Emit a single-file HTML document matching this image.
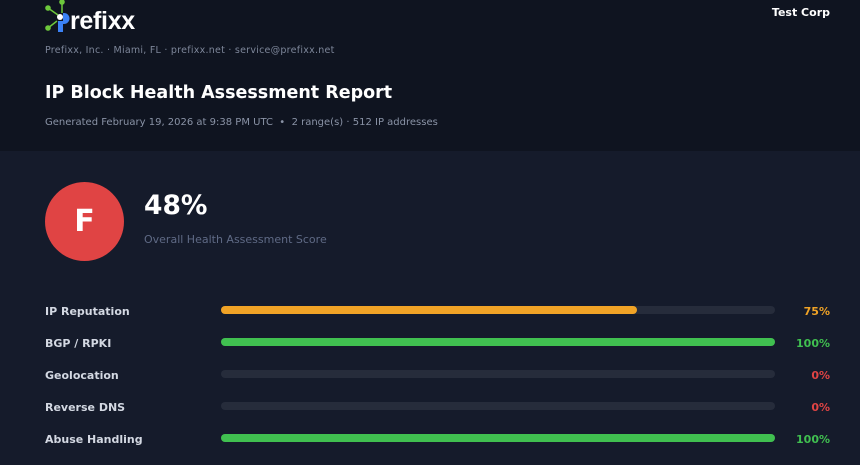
<!DOCTYPE html>
<html><head><style>
*{margin:0;padding:0;box-sizing:border-box}
body{width:860px;height:465px;overflow:hidden;background:#151b2b;font-family:"DejaVu Sans","Liberation Sans",sans-serif;position:relative}
.hdr{position:absolute;left:0;top:0;width:860px;height:151px;background:#0f1420}
.t{position:absolute;white-space:nowrap}
.row{position:absolute;left:0;width:860px;height:20px}
.lbl{position:absolute;left:45px;top:2px;font-size:11px;font-weight:bold;color:#d3d8e2}
.track{position:absolute;left:221px;top:3px;width:554px;height:8px;border-radius:4px;background:#262c3b}
.fill{height:8px;border-radius:4px}
.pct{position:absolute;right:30px;top:2px;font-size:11px;font-weight:bold}
</style></head><body>
<div class="hdr"></div>
<svg class="t" style="left:44px;top:0" width="26" height="34" viewBox="0 0 26 34">
<line x1="4" y1="8" x2="14" y2="15" stroke="#6dc83c" stroke-width="1.5"/>
<line x1="18" y1="2" x2="18" y2="13" stroke="#6dc83c" stroke-width="1.5"/>
<line x1="4" y1="28" x2="13" y2="21" stroke="#6dc83c" stroke-width="1.5"/>
<circle cx="4" cy="8" r="2.8" fill="#6dc83c"/><circle cx="18" cy="2" r="2.8" fill="#6dc83c"/><circle cx="4" cy="28" r="2.8" fill="#6dc83c"/>
<circle cx="16" cy="17" r="3" fill="#fff"/>
<rect x="14" y="21" width="5" height="11" fill="#3b82f6"/>
<path d="M19 13 h1 a5.5 5.5 0 0 1 0 11 h-1z" fill="#3b82f6"/>
</svg>
<div class="t" style="left:70px;top:7px;font-size:25px;font-weight:bold;color:#fff;font-family:'Liberation Sans',sans-serif;letter-spacing:-0.3px">refixx</div>
<div class="t" style="right:30px;top:6px;font-size:11px;font-weight:bold;color:#fff">Test Corp</div>
<div class="t" style="left:45px;top:45px;font-size:9.5px;color:#7d8699;letter-spacing:0.25px">Prefixx, Inc. · Miami, FL · prefixx.net · service@prefixx.net</div>
<div class="t" style="left:45px;top:83px;font-size:17.5px;font-weight:bold;color:#fff">IP Block Health Assessment Report</div>
<div class="t" style="left:45px;top:117px;font-size:10px;color:#8a93a6">Generated February 19, 2026 at 9:38 PM UTC &nbsp;•&nbsp; 2 range(s) · 512 IP addresses</div>
<div class="t" style="left:45px;top:182px;width:79px;height:79px;border-radius:50%;background:#e04444;color:#fff;font-size:30px;font-weight:bold;text-align:center;line-height:79px">F</div>
<div class="t" style="left:144px;top:190px;font-size:26.5px;font-weight:bold;color:#fff">48%</div>
<div class="t" style="left:144px;top:233px;font-size:11px;color:#5f6a85">Overall Health Assessment Score</div>
<div class="row" style="top:303px"><div class="lbl">IP Reputation</div><div class="track"><div class="fill" style="width:75%;background:#f0a326"></div></div><div class="pct" style="color:#f0a326">75%</div></div>
<div class="row" style="top:335px"><div class="lbl">BGP / RPKI</div><div class="track"><div class="fill" style="width:100%;background:#40c050"></div></div><div class="pct" style="color:#40c050">100%</div></div>
<div class="row" style="top:367px"><div class="lbl">Geolocation</div><div class="track"></div><div class="pct" style="color:#e04444">0%</div></div>
<div class="row" style="top:399px"><div class="lbl">Reverse DNS</div><div class="track"></div><div class="pct" style="color:#e04444">0%</div></div>
<div class="row" style="top:431px"><div class="lbl">Abuse Handling</div><div class="track"><div class="fill" style="width:100%;background:#40c050"></div></div><div class="pct" style="color:#40c050">100%</div></div>
</body></html>
